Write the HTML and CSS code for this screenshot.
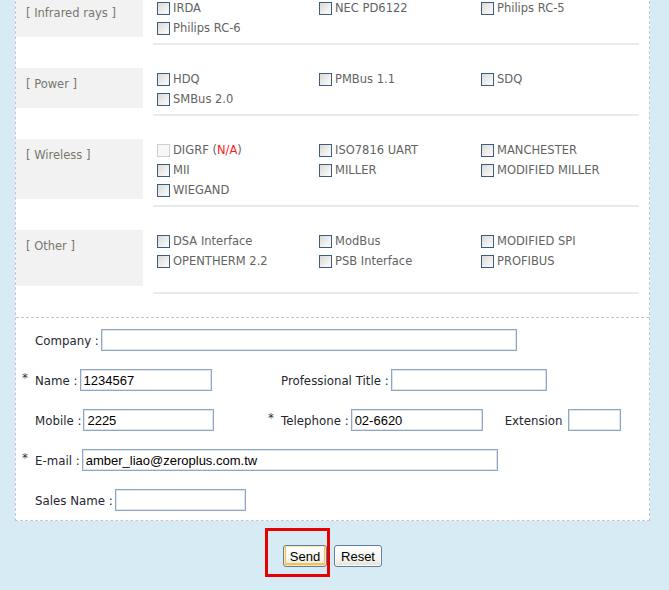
FILE: index.html
```html
<!DOCTYPE html>
<html>
<head>
<meta charset="utf-8">
<title>Protocol request</title>
<link rel="stylesheet" href="styles.css">
</head>
<body>
<div class="page">
  <div class="panel">
    <section class="groups">
      <div class="group">
        <div class="group-label">[ Infrared rays ]</div>
        <div class="opts">
          <label class="opt"><input type="checkbox"><span>IRDA</span></label>
          <label class="opt"><input type="checkbox"><span>NEC PD6122</span></label>
          <label class="opt"><input type="checkbox"><span>Philips RC-5</span></label>
          <label class="opt"><input type="checkbox"><span>Philips RC-6</span></label>
        </div>
      </div>
      <div class="group">
        <div class="group-label">[ Power ]</div>
        <div class="opts">
          <label class="opt"><input type="checkbox"><span>HDQ</span></label>
          <label class="opt"><input type="checkbox"><span>PMBus 1.1</span></label>
          <label class="opt"><input type="checkbox"><span>SDQ</span></label>
          <label class="opt"><input type="checkbox"><span>SMBus 2.0</span></label>
        </div>
      </div>
      <div class="group">
        <div class="group-label">[ Wireless ]</div>
        <div class="opts">
          <label class="opt"><input type="checkbox" disabled><span>DIGRF (<em class="na">N/A</em>)</span></label>
          <label class="opt"><input type="checkbox"><span>ISO7816 UART</span></label>
          <label class="opt"><input type="checkbox"><span>MANCHESTER</span></label>
          <label class="opt"><input type="checkbox"><span>MII</span></label>
          <label class="opt"><input type="checkbox"><span>MILLER</span></label>
          <label class="opt"><input type="checkbox"><span>MODIFIED MILLER</span></label>
          <label class="opt"><input type="checkbox"><span>WIEGAND</span></label>
        </div>
      </div>
      <div class="group group--extra">
        <div class="group-label">[ Other ]</div>
        <div class="opts">
          <label class="opt"><input type="checkbox"><span>DSA Interface</span></label>
          <label class="opt"><input type="checkbox"><span>ModBus</span></label>
          <label class="opt"><input type="checkbox"><span>MODIFIED SPI</span></label>
          <label class="opt"><input type="checkbox"><span>OPENTHERM 2.2</span></label>
          <label class="opt"><input type="checkbox"><span>PSB Interface</span></label>
          <label class="opt"><input type="checkbox"><span>PROFIBUS</span></label>
        </div>
      </div>
    </section>

    <form class="contact">
      <div class="row">
        <span class="req"></span>
        <div class="field">
          <span class="lbl">Company :</span>
          <input class="txt w-wide" type="text" value="">
        </div>
      </div>
      <div class="row">
        <span class="req">*</span>
        <div class="field field--left">
          <span class="lbl">Name :</span>
          <input class="txt w-name" type="text" value="1234567">
        </div>
        <span class="req"></span>
        <div class="field">
          <span class="lbl">Professional Title :</span>
          <input class="txt w-title" type="text" value="">
        </div>
      </div>
      <div class="row">
        <span class="req"></span>
        <div class="field field--left">
          <span class="lbl">Mobile :</span>
          <input class="txt w-mobile" type="text" value="2225">
        </div>
        <span class="req">*</span>
        <div class="field">
          <span class="lbl">Telephone :</span>
          <input class="txt w-tel" type="text" value="02-6620">
          <span class="lbl lbl--ext">Extension</span>
          <input class="txt w-ext" type="text" value="">
        </div>
      </div>
      <div class="row">
        <span class="req">*</span>
        <div class="field">
          <span class="lbl">E-mail :</span>
          <input class="txt w-wide" type="text" value="amber_liao@zeroplus.com.tw">
        </div>
      </div>
      <div class="row">
        <span class="req"></span>
        <div class="field">
          <span class="lbl">Sales Name :</span>
          <input class="txt w-sales" type="text" value="">
        </div>
      </div>
    </form>
  </div>

  <div class="actions">
    <span class="mark-wrap">
      <button class="btn btn--default" type="button">Send</button>
      <span class="mark"></span>
    </span>
    <button class="btn" type="button">Reset</button>
  </div>
</div>
</body>
</html>
```

FILE: styles.css
```css
html, body {
  margin: 0;
  padding: 0;
  background: #d6ebf4;
  height: 100%;
  overflow: hidden;
}

body {
  font-family: "DejaVu Sans", Verdana, sans-serif;
  font-size: 11.5px;
}

.page {
  width: 669px;
}

.panel {
  margin: -4px 19px 0 15px;
  background: #ffffff;
  border: 1px dashed #c4c8cc;
}

/* ---------- protocol groups ---------- */
.groups {
  display: flex;
  flex-direction: column;
}

.group {
  display: grid;
  grid-template-columns: 127px 486px;
  column-gap: 10px;
  margin-bottom: 23px;
}

.group-label {
  background: #f2f2f2;
  color: #7a7670;
  padding: 6px 0 0 10px;
  line-height: 20px;
  margin-bottom: 8px;
}

.opts {
  display: grid;
  grid-template-columns: repeat(3, 162px);
  grid-auto-rows: 20px;
  padding: 1px 0 5px 4px;
  border-bottom: 2px solid #e9e9e9;
}

.group--extra .opts {
  padding-bottom: 21px;
}

.opt {
  display: flex;
  align-items: center;
  gap: 3px;
  color: #636363;
  line-height: 20px;
  white-space: nowrap;
}

.opt input {
  -webkit-appearance: none;
  appearance: none;
  margin: 0;
  width: 13px;
  height: 13px;
  box-sizing: border-box;
  border: 1px solid #3d5c7e;
  background: linear-gradient(135deg, #d9d9d6 0%, #f0f0ee 60%, #fbfbfb 100%);
  flex: none;
}

.opt input:disabled {
  border-color: #cfcfcf;
  background: #f7f7f7;
}

.na {
  font-style: normal;
  color: #ff1a1a;
}

/* ---------- contact form ---------- */
.contact {
  border-top: 1px dashed #c4c8cc;
  padding: 11px 0 9px 6px;
  display: flex;
  flex-direction: column;
  gap: 18px;
  color: #26262f;
  font-size: 11.8px;
}

.row {
  display: flex;
  align-items: center;
  height: 22px;
}

.req {
  width: 13px;
  flex: none;
  align-self: flex-start;
  font-size: 12px;
  line-height: 12px;
  margin-top: 3px;
  color: #333;
}

.field {
  display: flex;
  align-items: center;
  gap: 2px;
}

.field--left {
  width: 233px;
  flex: none;
}

.lbl {
  white-space: nowrap;
  padding-top: 2px;
}

.lbl--ext {
  margin-left: 20px;
  margin-right: 3px;
}

.txt {
  box-sizing: border-box;
  height: 22px;
  margin: 0;
  padding: 0 3px;
  border: 1px solid #8fa7c0;
  box-shadow: inset 0 0 0 1px #dbe3ec;
  background: #fff;
  font-family: "Liberation Sans", Arial, sans-serif;
  font-size: 13px;
  color: #000;
  outline: none;
}

.w-wide { width: 416px; }
.w-name { width: 132px; }
.w-title { width: 156px; }
.w-mobile { width: 131px; }
.w-tel { width: 132px; }
.w-ext { width: 53px; }
.w-sales { width: 131px; }

/* ---------- buttons ---------- */
.actions {
  margin: 0 19px 0 15px;
  padding-top: 24px;
  display: flex;
  justify-content: center;
  gap: 7px;
}

.mark-wrap {
  position: relative;
  display: inline-flex;
}

.btn {
  height: 22px;
  margin: 0;
  padding: 0 6px;
  font-family: "Liberation Sans", Arial, sans-serif;
  font-size: 13px;
  color: #000;
  border: 1px solid #5f7e9f;
  border-radius: 3px;
  background: linear-gradient(#ffffff, #f4f3ee 70%, #e2e0d6);
  box-shadow: inset 0 0 0 1px #ffffff;
}

.btn--default {
  width: 44px;
  padding: 0;
  box-shadow: inset 0 0 0 1px #fde9a8, inset 0 -1px 0 2px #f3c05a;
}

.mark {
  position: absolute;
  left: -18px;
  top: -17px;
  width: 65px;
  height: 49px;
  box-sizing: border-box;
  border: 3px solid #e60000;
  pointer-events: none;
}
```
